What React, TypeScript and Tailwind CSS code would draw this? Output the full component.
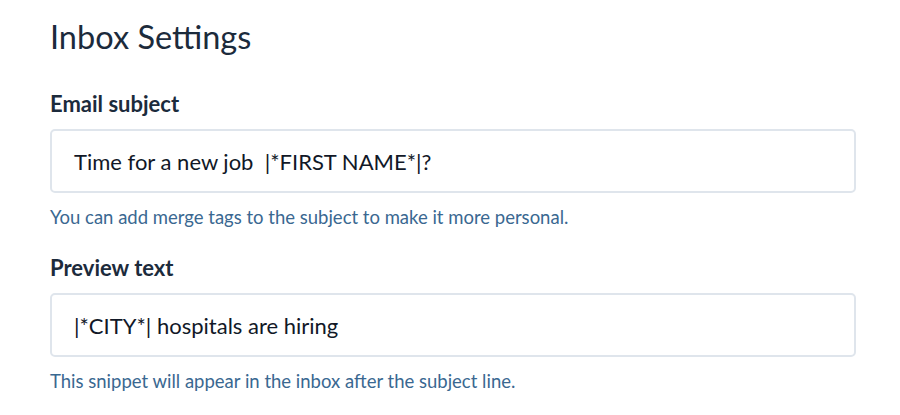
export default function App() {
  return (
    <div className="w-[900px] h-[415px] bg-white px-[50px] pt-[16px] overflow-hidden" style={{ fontFamily: "Lato, 'Open Sans', sans-serif" }}>
      <h1 className="text-[32.5px] leading-[42px] text-[#1c2b3c] font-normal">Inbox Settings</h1>
      <div className="mt-[32px]">
        <label className="block text-[22px] leading-[28px] font-bold text-[#1c2b3c]">Email subject</label>
        <div className="mt-[11px] w-[806px] h-[64px] border-2 border-[#dfe5ec] rounded-[5px] flex items-center px-[22px] text-[22px] text-[#111827]">
          Time for a new job&nbsp;&nbsp;|*FIRST NAME*|?
        </div>
        <p className="mt-[12px] text-[18.5px] leading-[24px] text-[#3a6891]">You can add merge tags to the subject to make it more personal.</p>
      </div>
      <div className="mt-[25px]">
        <label className="block text-[22px] leading-[28px] font-bold text-[#1c2b3c]">Preview text</label>
        <div className="mt-[11px] w-[806px] h-[64px] border-2 border-[#dfe5ec] rounded-[5px] flex items-center px-[22px] text-[22px] text-[#111827]">
          |*CITY*| hospitals are hiring
        </div>
        <p className="mt-[12px] text-[18.5px] leading-[24px] text-[#3a6891]">This snippet will appear in the inbox after the subject line.</p>
      </div>
    </div>
  );
}
